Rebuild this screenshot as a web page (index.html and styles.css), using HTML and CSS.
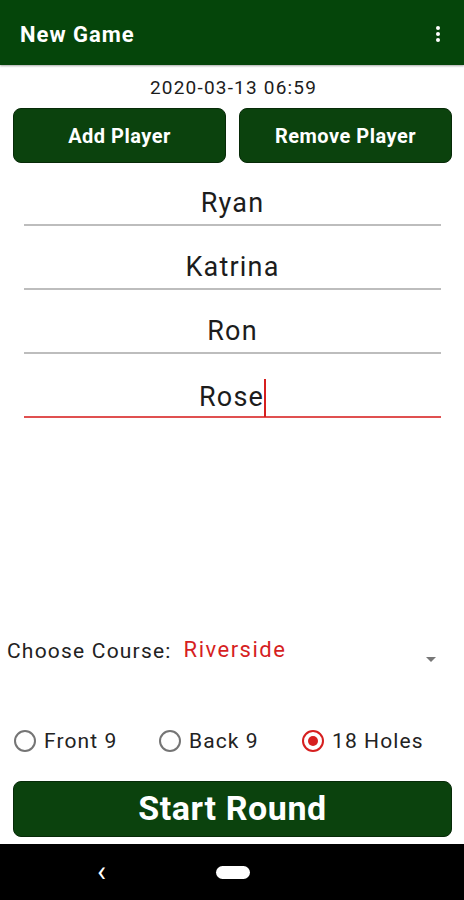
FILE: index.html
```html
<html lang="en">
<head>
<meta charset="UTF-8" />
<meta name="viewport" content="width=device-width, initial-scale=1" />
<title>New Game</title>
<link rel="stylesheet" href="styles.css">
</head>
<body>
  <div class="screen">
    <header class="appbar">
      <span class="title">New Game</span>
      <span class="menu"><i></i><i></i><i></i></span>
    </header>
    <main class="content">
      <div class="date">2020-03-13 06:59</div>
      <div class="actions">
        <button class="btn">Add Player</button>
        <button class="btn">Remove Player</button>
      </div>
      <div class="players">
        <div class="field">Ryan</div>
        <div class="field">Katrina</div>
        <div class="field">Ron</div>
        <div class="field active">Rose<span class="caret"></span></div>
      </div>
      <div class="spacer"></div>
      <div class="course">
        <span class="label">Choose Course:</span>
        <span class="value">Riverside</span>
        <span class="arrow"></span>
      </div>
      <div class="holes">
        <label class="radio"><span class="dot"></span>Front 9</label>
        <label class="radio"><span class="dot"></span>Back 9</label>
        <label class="radio on"><span class="dot"></span>18 Holes</label>
      </div>
      <button class="btn start">Start Round</button>
    </main>
    <nav class="navbar">
      <span class="back">&lsaquo;</span>
      <span class="home"></span>
    </nav>
  </div>
</body>
</html>
```

FILE: styles.css
```css
:root{
  --green:#0b420d;
  --bar:#05450a;
  --red:#d61f1f;
  --line:#bdbdbd;
}
*{box-sizing:border-box}
html,body{margin:0;height:100%}
body{
  font-family: Roboto, "Noto Sans", Arial, sans-serif;
  background:#fff;
  color:#1c1c1c;
}
.screen{
  height:900px;
  display:flex;
  flex-direction:column;
}

/* app bar */
.appbar{
  height:65px;
  background:var(--bar);
  display:flex;
  align-items:center;
  justify-content:space-between;
  padding:0 24px 0 20px;
  color:#fff;
  box-shadow:0 1px 2px rgba(0,0,0,.35);
  position:relative;
  z-index:1;
}
.title{ font-size:22px; font-weight:700; letter-spacing:1px; padding-top:4px; }
.menu{ display:flex; flex-direction:column; gap:2px; margin-top:2px; }
.menu i{ width:4px; height:4px; border-radius:50%; background:#fff; display:block; }

.content{
  flex:1;
  display:flex;
  flex-direction:column;
  padding:11px 12px 7px 13px;
}
.date{ text-align:center; font-size:19px; letter-spacing:1.2px; margin-left:2px; }
.actions{
  display:grid;
  grid-template-columns:1fr 1fr;
  gap:13px;
  margin-top:9px;
}
.btn{
  background:var(--green);
  color:#fff;
  border:1px solid #072a08;
  border-radius:8px;
  height:55px;
  font-family:inherit;
  font-size:20px;
  letter-spacing:0.5px;
  font-weight:700;
}

.players{ padding:0 11px 0 11px; margin-top:14px; }
.field{
  height:64px;
  border-bottom:2px solid var(--line);
  text-align:center;
  font-size:27px;
  letter-spacing:1.2px;
  line-height:32px;
  padding-top:25px;
}
.field:first-child{ height:49px; padding-top:10px; }
.field.active{ border-bottom-color:#e05050; }
.caret{
  display:inline-block;
  width:2px;
  height:38px;
  background:var(--red);
  vertical-align:-11px;
  margin-left:0;
}

.spacer{ flex:1; }

.course{
  display:flex;
  align-items:center;
  font-size:21px;
  letter-spacing:1.2px;
  margin-left:-6px;
  margin-bottom:66px;
}
.label{ color:#222; }
.value{ color:var(--red); margin-left:12px; font-size:22px; letter-spacing:1.5px; margin-top:-3px; }
.arrow{
  margin-left:auto;
  margin-right:16px;
  margin-top:16px;
  width:0;height:0;
  border-left:5px solid transparent;
  border-right:5px solid transparent;
  border-top:5px solid #777;
}

.holes{
  display:flex;
  font-size:21px;
  letter-spacing:1.1px;
  margin-bottom:28px;
}
.radio{ display:flex; align-items:center; gap:8px; color:#222; }
.radio:nth-child(1){ margin-left:1px; width:145px; }
.radio:nth-child(2){ width:143px; }
.dot{
  width:22px; height:22px;
  border:2px solid #757575;
  border-radius:50%;
  display:grid;
  place-items:center;
}
.radio.on .dot{ border-color:var(--red); }
.radio.on .dot::after{
  content:"";
  width:10px; height:10px;
  border-radius:50%;
  background:var(--red);
}

.start{
  height:56px;
  font-size:34px;
  letter-spacing:0.6px;
  width:100%;
  line-height:1;
  padding-bottom:4px;
}

.navbar{
  height:56px;
  background:#000;
  display:flex;
  align-items:center;
  color:#fff;
}
.back{ font-size:30px; margin-left:97px; margin-top:-4px; }
.home{
  width:34px; height:13px;
  background:#fff;
  border-radius:7px;
  margin-left:110px;
}
```
